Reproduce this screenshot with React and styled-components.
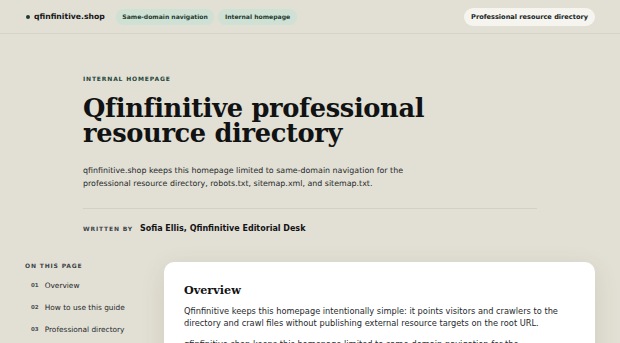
import React from 'react'
import styled, { createGlobalStyle } from 'styled-components'

const GlobalStyle = createGlobalStyle`
  html, body {
    margin: 0;
    padding: 0;
    background: #e2dfd4;
  }
  body {
    font-family: "DejaVu Sans", Verdana, sans-serif;
    color: #222527;
  }
  * { box-sizing: border-box; }
  p, h1, h2 { margin: 0; }
`

const Header = styled.header`
  height: 34px;
  display: flex;
  align-items: center;
  justify-content: space-between;
  padding: 0 25px 0 26px;
  border-bottom: 1px solid #d5d2c6;
`

const NavLeft = styled.div`
  display: flex;
  align-items: center;
  gap: 4px;
`

const Brand = styled.div`
  display: flex;
  align-items: center;
  gap: 4px;
  margin-right: 7px;
  font-weight: bold;
  font-size: 7.7px;
  color: #141617;
  &::before {
    content: '';
    width: 4px;
    height: 4px;
    border-radius: 50%;
    background: #1f3b31;
  }
`

const Pill = styled.span`
  display: inline-flex;
  align-items: center;
  height: ${(p) => (p.$light ? '18px' : '16px')};
  padding: 0 ${(p) => (p.$light ? '7px' : '6.5px')};
  border-radius: 9px;
  font-size: ${(p) => (p.$light ? '6.6px' : '6.1px')};
  font-weight: bold;
  color: ${(p) => (p.$light ? '#17231d' : '#1f3a2e')};
  background: ${(p) => (p.$light ? '#f5f4ef' : '#cfe0d5')};
`

const Hero = styled.section`
  width: 454px;
  margin: 0 auto;
  padding-top: 40.5px;
`

const Eyebrow = styled.p`
  font-size: 6px;
  font-weight: bold;
  letter-spacing: 0.14em;
  text-transform: uppercase;
  color: ${(p) => p.$color || '#22473a'};
`

const Title = styled.h1`
  margin-top: 14px;
  font-family: "DejaVu Serif", Georgia, serif;
  font-weight: bold;
  font-size: 25.7px;
  line-height: 25px;
  letter-spacing: -0.35px;
  color: #111213;
`

const Lead = styled.p`
  margin-top: 18.5px;
  font-size: 7.9px;
  line-height: 13px;
  color: #262a2c;
  max-width: 360px;
`

const Divider = styled.hr`
  margin: 18px 0 0;
  border: 0;
  border-top: 1px solid #d3d0c4;
`

const Byline = styled.div`
  display: flex;
  align-items: center;
  gap: 7px;
  margin-top: 15px;
`

const Author = styled.span`
  font-size: 8px;
  font-weight: bold;
  color: #121314;
`

const Main = styled.div`
  display: grid;
  grid-template-columns: 139px 1fr;
  align-items: start;
  padding: 0 25px;
  margin-top: 29px;
`

const TocList = styled.ol`
  list-style: none;
  margin: 10px 0 0;
  padding: 0 0 0 6px;
  display: flex;
  flex-direction: column;
  gap: 8.5px;
`

const TocItem = styled.li`
  display: flex;
  align-items: center;
  gap: 6px;
  font-size: 7.4px;
  line-height: 13.5px;
  color: #262a2c;
`

const TocNum = styled.span`
  font-size: 5.5px;
  font-weight: bold;
  color: #4b5150;
`

const Card = styled.article`
  background: #ffffff;
  border-radius: 10px;
  padding: 21px 20px 24px;
  box-shadow: 0 6px 24px rgba(80, 72, 50, 0.12);
  min-height: 120px;
`

const CardTitle = styled.h2`
  font-family: "DejaVu Serif", Georgia, serif;
  font-weight: bold;
  font-size: 11.2px;
  line-height: 14px;
  color: #111213;
`

const CardText = styled.p`
  margin-top: 7.5px;
  max-width: 380px;
  font-size: 8.25px;
  line-height: 12.75px;
  color: #262a2c;
`

const toc = ['Overview', 'How to use this guide', 'Professional directory']

export default function App() {
  return (
    <>
      <GlobalStyle />
      <Header>
        <NavLeft>
          <Brand>qfinfinitive.shop</Brand>
          <Pill>Same-domain navigation</Pill>
          <Pill>Internal homepage</Pill>
        </NavLeft>
        <Pill $light>Professional resource directory</Pill>
      </Header>
      <Hero>
        <Eyebrow>Internal homepage</Eyebrow>
        <Title>Qfinfinitive professional resource directory</Title>
        <Lead>
          qfinfinitive.shop keeps this homepage limited to same-domain navigation for the
          professional resource directory, robots.txt, sitemap.xml, and sitemap.txt.
        </Lead>
        <Divider />
        <Byline>
          <Eyebrow $color="#3d4448">Written by</Eyebrow>
          <Author>Sofia Ellis, Qfinfinitive Editorial Desk</Author>
        </Byline>
      </Hero>
      <Main>
        <nav>
          <Eyebrow $color="#3d4448">On this page</Eyebrow>
          <TocList>
            {toc.map((item, i) => (
              <TocItem key={item}>
                <TocNum>{String(i + 1).padStart(2, '0')}</TocNum>
                {item}
              </TocItem>
            ))}
          </TocList>
        </nav>
        <Card>
          <CardTitle>Overview</CardTitle>
          <CardText>
            Qfinfinitive keeps this homepage intentionally simple: it points visitors and crawlers to the
            directory and crawl files without publishing external resource targets on the root URL.
          </CardText>
          <CardText>
            qfinfinitive.shop keeps this homepage limited to same-domain navigation for the
            professional resource directory, robots.txt, sitemap.xml, and sitemap.txt.
          </CardText>
        </Card>
      </Main>
    </>
  )
}
